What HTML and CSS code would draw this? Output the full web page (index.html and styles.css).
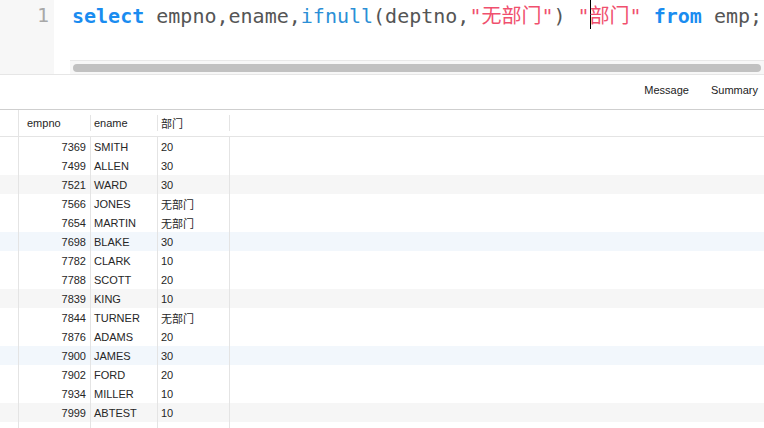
FILE: index.html
```html
<!DOCTYPE html>
<html>
<head>
<meta charset="utf-8">
<link rel="stylesheet" href="styles.css">
</head>
<body>
<div class="editor">
  <div class="gutter"><div class="lineno">1</div></div>
  <div class="code-area">
    <div class="code-line"><span class="kw">select</span> empno,ename,<span class="fn">ifnull</span>(deptno,<span class="str">"无部门"</span>) <span class="str">"<span class="cursor"></span>部门"</span> <span class="kw">from</span> emp;</div>
    <div class="hscroll"><div class="thumb"></div></div>
  </div>
</div>
<div class="toolbar">
  <span class="tab">Message</span>
  <span class="tab">Summary</span>
</div>
<div class="grid">
  <div class="row head">
    <div class="c c0"></div>
    <div class="c c1"><div class="hin">empno</div></div>
    <div class="c c2"><div class="hin">ename</div></div>
    <div class="c c3"><div class="hin">部门</div></div>
    <div class="c c4"></div>
  </div>
  <div class="row"><div class="c c0"></div><div class="c c1 num">7369</div><div class="c c2">SMITH</div><div class="c c3">20</div><div class="c c4"></div></div>
  <div class="row"><div class="c c0"></div><div class="c c1 num">7499</div><div class="c c2">ALLEN</div><div class="c c3">30</div><div class="c c4"></div></div>
  <div class="row gray"><div class="c c0"></div><div class="c c1 num">7521</div><div class="c c2">WARD</div><div class="c c3">30</div><div class="c c4"></div></div>
  <div class="row"><div class="c c0"></div><div class="c c1 num">7566</div><div class="c c2">JONES</div><div class="c c3">无部门</div><div class="c c4"></div></div>
  <div class="row"><div class="c c0"></div><div class="c c1 num">7654</div><div class="c c2">MARTIN</div><div class="c c3">无部门</div><div class="c c4"></div></div>
  <div class="row blue"><div class="c c0"></div><div class="c c1 num">7698</div><div class="c c2">BLAKE</div><div class="c c3">30</div><div class="c c4"></div></div>
  <div class="row"><div class="c c0"></div><div class="c c1 num">7782</div><div class="c c2">CLARK</div><div class="c c3">10</div><div class="c c4"></div></div>
  <div class="row"><div class="c c0"></div><div class="c c1 num">7788</div><div class="c c2">SCOTT</div><div class="c c3">20</div><div class="c c4"></div></div>
  <div class="row gray"><div class="c c0"></div><div class="c c1 num">7839</div><div class="c c2">KING</div><div class="c c3">10</div><div class="c c4"></div></div>
  <div class="row"><div class="c c0"></div><div class="c c1 num">7844</div><div class="c c2">TURNER</div><div class="c c3">无部门</div><div class="c c4"></div></div>
  <div class="row"><div class="c c0"></div><div class="c c1 num">7876</div><div class="c c2">ADAMS</div><div class="c c3">20</div><div class="c c4"></div></div>
  <div class="row blue"><div class="c c0"></div><div class="c c1 num">7900</div><div class="c c2">JAMES</div><div class="c c3">30</div><div class="c c4"></div></div>
  <div class="row"><div class="c c0"></div><div class="c c1 num">7902</div><div class="c c2">FORD</div><div class="c c3">20</div><div class="c c4"></div></div>
  <div class="row"><div class="c c0"></div><div class="c c1 num">7934</div><div class="c c2">MILLER</div><div class="c c3">10</div><div class="c c4"></div></div>
  <div class="row gray"><div class="c c0"></div><div class="c c1 num">7999</div><div class="c c2">ABTEST</div><div class="c c3">10</div><div class="c c4"></div></div>
  <div class="row filler"><div class="c c0"></div><div class="c c1"></div><div class="c c2"></div><div class="c c3"></div><div class="c c4"></div></div>
</div>
</body>
</html>
```

FILE: styles.css
```css
* { box-sizing: border-box; }
html, body { margin: 0; padding: 0; height: 100%; overflow: hidden; background: #fff; }
body { display: flex; flex-direction: column; }

.editor {
  display: flex;
  height: 75px;
  border-bottom: 1px solid #e6e6e6;
  flex: none;
}
.gutter {
  width: 54px;
  background: #f7f7f7;
  flex: none;
}
.lineno {
  font-family: "DejaVu Sans Mono", monospace;
  font-size: 20px;
  line-height: 30px;
  color: #a8a8a8;
  text-align: right;
  padding-right: 5px;
}
.code-area {
  flex: 1;
  display: flex;
  flex-direction: column;
  min-width: 0;
}
.code-line {
  font-family: "DejaVu Sans Mono", "Noto Sans CJK SC", monospace;
  font-size: 20px;
  line-height: 30px;
  color: #555;
  padding-left: 18px;
  white-space: nowrap;
  margin-top: 1px;
}
.kw { color: #1a8cf0; font-weight: bold; }
.fn { color: #2b8fd6; }
.str { color: #f0506e; }
.cursor {
  display: inline-block;
  width: 1px;
  height: 29px;
  background: #000;
  vertical-align: top;
  margin-top: -1px;
  margin-right: -1px;
}
.hscroll {
  margin-top: auto;
  margin-left: 16px;
  height: 14px;
  border-top: 1px solid #e8e8e8;
  background: #f7f7f7;
  padding: 3px 3px 2px 3px;
}
.thumb {
  height: 8px;
  border-radius: 4px;
  background: #c1c1c1;
}

.toolbar {
  flex: none;
  height: 35px;
  border-bottom: 1px solid #cfcfcf;
  display: flex;
  justify-content: flex-end;
  align-items: center;
  gap: 22px;
  padding-right: 6px;
  padding-bottom: 4px;
  font-family: "Liberation Sans", Arial, sans-serif;
  font-size: 11px;
  color: #222;
}

.grid {
  flex: 1;
  display: flex;
  flex-direction: column;
  font-family: "Liberation Sans", Arial, "Noto Sans CJK SC", sans-serif;
  font-size: 11px;
  color: #262626;
}
.row {
  display: grid;
  grid-template-columns: 19px 72px 67px 72px 1fr;
  height: 19px;
  flex: none;
}
.row.gray { background: #f6f6f6; }
.row.blue { background: #f2f7fc; }
.row.filler { flex: 1; height: auto; }
.c {
  border-right: 1px solid #e4e4e4;
  display: flex;
  align-items: center;
  white-space: nowrap;
  padding-left: 3px;
}
.c.c0 { padding: 0; }
.c.c4 { border-right: none; }
.c.num { justify-content: flex-end; padding-right: 4px; padding-left: 0; }

.row.head {
  height: 27px;
  border-bottom: 1px solid #e4e4e4;
}
.row.head .c { border-right: none; padding: 0; }
.row.head .c.c0 { border-right: 1px solid #e4e4e4; }
.hin {
  width: 100%;
  height: 16px;
  display: flex;
  align-items: center;
  border-right: 1px solid #e4e4e4;
  padding-left: 3px;
  color: #262626;
}
.c1 .hin { padding-left: 8px; }
```
